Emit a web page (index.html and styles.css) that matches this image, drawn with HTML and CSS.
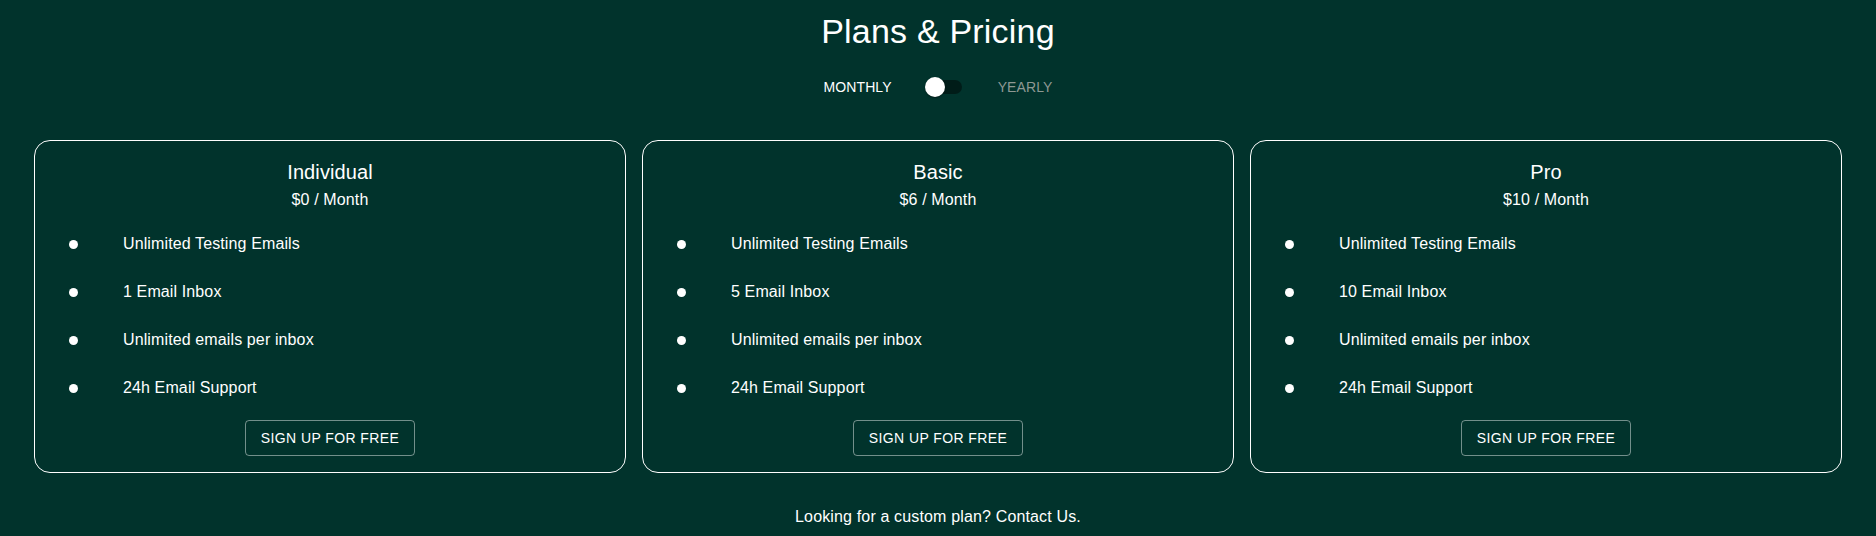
FILE: index.html
```html
<!DOCTYPE html>
<html lang="en">
<head>
<meta charset="utf-8">
<title>Plans &amp; Pricing</title>
<link rel="stylesheet" href="styles.css">
</head>
<body>
<main class="page">
  <h1 class="page-title">Plans &amp; Pricing</h1>
  <div class="billing-toggle">
    <span class="toggle-label active">MONTHLY</span>
    <span class="switch">
      <span class="switch-track"></span>
      <span class="switch-thumb"></span>
    </span>
    <span class="toggle-label inactive">YEARLY</span>
  </div>

  <section class="plans">
    <article class="plan-card">
      <h2 class="plan-name">Individual</h2>
      <p class="plan-price">$0 / Month</p>
      <ul class="feature-list">
        <li class="feature"><span class="feature-icon"><span class="dot"></span></span><span class="feature-text">Unlimited Testing Emails</span></li>
        <li class="feature"><span class="feature-icon"><span class="dot"></span></span><span class="feature-text">1 Email Inbox</span></li>
        <li class="feature"><span class="feature-icon"><span class="dot"></span></span><span class="feature-text">Unlimited emails per inbox</span></li>
        <li class="feature"><span class="feature-icon"><span class="dot"></span></span><span class="feature-text">24h Email Support</span></li>
      </ul>
      <div class="plan-action"><button class="signup-btn" type="button">SIGN UP FOR FREE</button></div>
    </article>

    <article class="plan-card">
      <h2 class="plan-name">Basic</h2>
      <p class="plan-price">$6 / Month</p>
      <ul class="feature-list">
        <li class="feature"><span class="feature-icon"><span class="dot"></span></span><span class="feature-text">Unlimited Testing Emails</span></li>
        <li class="feature"><span class="feature-icon"><span class="dot"></span></span><span class="feature-text">5 Email Inbox</span></li>
        <li class="feature"><span class="feature-icon"><span class="dot"></span></span><span class="feature-text">Unlimited emails per inbox</span></li>
        <li class="feature"><span class="feature-icon"><span class="dot"></span></span><span class="feature-text">24h Email Support</span></li>
      </ul>
      <div class="plan-action"><button class="signup-btn" type="button">SIGN UP FOR FREE</button></div>
    </article>

    <article class="plan-card">
      <h2 class="plan-name">Pro</h2>
      <p class="plan-price">$10 / Month</p>
      <ul class="feature-list">
        <li class="feature"><span class="feature-icon"><span class="dot"></span></span><span class="feature-text">Unlimited Testing Emails</span></li>
        <li class="feature"><span class="feature-icon"><span class="dot"></span></span><span class="feature-text">10 Email Inbox</span></li>
        <li class="feature"><span class="feature-icon"><span class="dot"></span></span><span class="feature-text">Unlimited emails per inbox</span></li>
        <li class="feature"><span class="feature-icon"><span class="dot"></span></span><span class="feature-text">24h Email Support</span></li>
      </ul>
      <div class="plan-action"><button class="signup-btn" type="button">SIGN UP FOR FREE</button></div>
    </article>
  </section>

  <p class="custom-plan">Looking for a custom plan? Contact Us.</p>
</main>
</body>
</html>
```

FILE: styles.css
```css
html, body {
  margin: 0;
  padding: 0;
  background: #01332c;
}

body {
  font-family: "Liberation Sans", Arial, sans-serif;
  color: #ffffff;
  width: 1876px;
  height: 536px;
  overflow: hidden;
}

.page {
  display: flex;
  flex-direction: column;
  align-items: center;
  padding: 10px 34px 0 34px;
}

.page-title {
  margin: 0;
  font-size: 34px;
  line-height: 42px;
  font-weight: 400;
  letter-spacing: 0.2px;
  text-align: center;
}

.billing-toggle {
  margin-top: 16px;
  height: 38px;
  display: flex;
  align-items: center;
  gap: 24px;
}

.toggle-label {
  font-size: 14px;
  line-height: 20px;
  letter-spacing: 0.1px;
}

.toggle-label.active {
  color: #ffffff;
}

.toggle-label.inactive {
  color: #8e9893;
}

.switch {
  position: relative;
  width: 58px;
  height: 38px;
  display: inline-block;
}

.switch-track {
  position: absolute;
  left: 12px;
  top: 12px;
  width: 34px;
  height: 14px;
  border-radius: 7px;
  background: rgba(0, 0, 0, 0.45);
}

.switch-thumb {
  position: absolute;
  left: 9px;
  top: 9px;
  width: 20px;
  height: 20px;
  border-radius: 50%;
  background: #ffffff;
  box-shadow: 0 2px 1px -1px rgba(0,0,0,0.2), 0 1px 1px 0 rgba(0,0,0,0.14), 0 1px 3px 0 rgba(0,0,0,0.12);
}

.plans {
  margin-top: 34px;
  width: 100%;
  display: grid;
  grid-template-columns: repeat(3, 1fr);
  gap: 16px;
}

.plan-card {
  border: 1px solid #ffffff;
  border-radius: 16px;
  padding: 16px;
  display: flex;
  flex-direction: column;
  align-items: stretch;
}

.plan-name {
  margin: 0;
  font-size: 20px;
  line-height: 31px;
  font-weight: 400;
  letter-spacing: 0.1px;
  text-align: center;
}

.plan-price {
  margin: 0;
  font-size: 16px;
  line-height: 24px;
  letter-spacing: 0.12px;
  text-align: center;
}

.feature-list {
  list-style: none;
  margin: 0;
  padding: 8px 0;
}

.feature {
  display: flex;
  align-items: center;
  padding: 8px 16px;
}

.feature-icon {
  width: 56px;
  flex-shrink: 0;
  display: flex;
  align-items: center;
}

.dot {
  width: 9px;
  height: 9px;
  margin-left: 2px;
  margin-top: 1px;
  border-radius: 50%;
  background: #ffffff;
}

.feature-text {
  margin: 4px 0;
  font-size: 16px;
  line-height: 24px;
  letter-spacing: 0.12px;
}

.plan-action {
  display: flex;
  justify-content: center;
}

.signup-btn {
  font-family: "Liberation Sans", Arial, sans-serif;
  font-size: 14px;
  line-height: 24px;
  letter-spacing: 0.4px;
  color: #ffffff;
  background: transparent;
  border: 1px solid rgba(255, 255, 255, 0.45);
  border-radius: 4px;
  padding: 5px 15px;
  cursor: pointer;
}

.custom-plan {
  margin: 32px 0 0 0;
  font-size: 16px;
  line-height: 24px;
  letter-spacing: 0.15px;
  text-align: center;
}
```
